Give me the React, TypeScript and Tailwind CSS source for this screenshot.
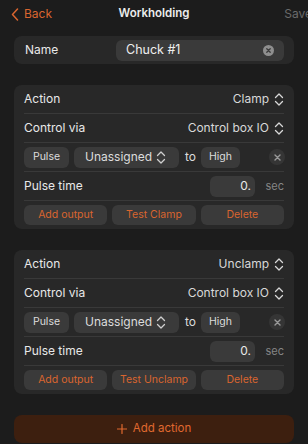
import React from "react";

const Updown = () => (
  <svg width="10" height="13" viewBox="0 0 10 13" fill="none" stroke="currentColor" strokeWidth="1.3" strokeLinecap="round" strokeLinejoin="round">
    <path d="M1.5 4.5 L5 1 L8.5 4.5" />
    <path d="M1.5 8.5 L5 12 L8.5 8.5" />
  </svg>
);

const Row = ({ children, last }: { children: React.ReactNode; last?: boolean }) => (
  <div className={`h-[29px] flex items-center ${last ? "" : "border-b border-[#393939]"}`}>{children}</div>
);

function ActionCard({ action, test }: { action: string; test: string }) {
  return (
    <div className="bg-[#282828] rounded-lg px-[10px]">
      <Row>
        <span className="text-[12px] text-[#e8e8e8]">Action</span>
        <span className="ml-auto flex items-center gap-[5px] text-[12px] text-[#d8d8d8]">
          {action}
          <Updown />
        </span>
      </Row>
      <Row>
        <span className="text-[12px] text-[#e8e8e8]">Control via</span>
        <span className="ml-auto flex items-center gap-[5px] text-[12px] text-[#d8d8d8]">
          Control box IO
          <Updown />
        </span>
      </Row>
      <Row>
        <div className="flex items-center w-full">
          <div className="h-[21px] w-[45px] rounded-md bg-[#3a3a3a] flex items-center justify-center text-[10.5px] text-[#dcdcdc]">Pulse</div>
          <div className="ml-[5px] h-[21px] w-[105px] rounded-md bg-[#3a3a3a] flex items-center pl-[11px] pr-[13px] text-[12px] text-[#dcdcdc]">
            Unassigned
            <span className="ml-auto text-[#cfcfcf]"><Updown /></span>
          </div>
          <span className="ml-[6px] text-[12px] text-[#dcdcdc]">to</span>
          <div className="ml-[5px] h-[21px] w-[39px] rounded-md bg-[#3a3a3a] flex items-center justify-center text-[10.5px] text-[#dcdcdc]">High</div>
          <div className="ml-auto mr-[-1px] w-[16px] h-[16px] rounded-full bg-[#353535] flex items-center justify-center">
            <svg width="7" height="7" viewBox="0 0 7 7" stroke="#9a9a9a" strokeWidth="1.4" strokeLinecap="round">
              <path d="M1 1 L6 6 M6 1 L1 6" />
            </svg>
          </div>
        </div>
      </Row>
      <Row>
        <span className="text-[12px] text-[#e8e8e8]">Pulse time</span>
        <div className="ml-auto h-[21px] w-[45px] rounded-md bg-[#3a3a3a] flex items-center justify-end pr-[4px] text-[12px] text-[#e8e8e8]">0.</div>
        <span className="w-[29px] text-right text-[11px] text-[#858585]">sec</span>
      </Row>
      <div className="py-[4px] grid grid-cols-3 gap-[5px]">
        {["Add output", test, "Delete"].map((t) => (
          <div key={t} className="h-[20px] rounded-md bg-[#3a3a3a] flex items-center justify-center text-[10.5px] text-[#d9652f]">{t}</div>
        ))}
      </div>
    </div>
  );
}

export default function App() {
  return (
    <div className="w-[308px] h-[444px] overflow-hidden bg-[#1c1c1c] px-[14px]" style={{ fontFamily: "Inter, 'Noto Sans', sans-serif" }}>
      <div className="h-[28px] relative flex items-center">
        <div className="flex items-center text-[#d9652f] ml-[-3px]">
          <svg width="8" height="13" viewBox="0 0 8 13" fill="none" stroke="currentColor" strokeWidth="1.5" strokeLinecap="round" strokeLinejoin="round">
            <path d="M6.5 1 L1.5 6.5 L6.5 12" />
          </svg>
          <span className="ml-[5px] text-[12px]">Back</span>
        </div>
        <span className="absolute left-0 right-0 text-center text-[11.5px] font-semibold text-[#ececec] pointer-events-none">Workholding</span>
        <span className="ml-auto mr-[-14px] text-[12px] text-[#6a6a6a] translate-x-[4px]">Save</span>
      </div>
      <div className="pt-[8px] flex flex-col gap-[21px]">
        <div className="h-[28px] bg-[#282828] rounded-lg flex items-center pl-[11px] pr-[10px]">
          <span className="text-[12px] text-[#e8e8e8]">Name</span>
          <div className="ml-auto w-[168px] h-[21px] rounded-md bg-[#3a3a3a] flex items-center pl-[10px] pr-[10px] text-[12.5px] text-[#eeeeee]">
            Chuck #1
            <div className="ml-auto w-[11px] h-[11px] rounded-full bg-[#8e8e8e] flex items-center justify-center">
              <svg width="5" height="5" viewBox="0 0 5 5" stroke="#3a3a3a" strokeWidth="1.3" strokeLinecap="round">
                <path d="M0.8 0.8 L4.2 4.2 M4.2 0.8 L0.8 4.2" />
              </svg>
            </div>
          </div>
        </div>
        <ActionCard action="Clamp" test="Test Clamp" />
        <ActionCard action="Unclamp" test="Test Unclamp" />
        <div className="h-[28px] rounded-lg bg-[#3d1f0f] flex items-center justify-center gap-[6px] text-[11.5px] text-[#e0692f]">
          <svg width="10" height="10" viewBox="0 0 10 10" stroke="currentColor" strokeWidth="1.2" strokeLinecap="round">
            <path d="M5 0.5 V9.5 M0.5 5 H9.5" />
          </svg>
          Add action
        </div>
      </div>
    </div>
  );
}
